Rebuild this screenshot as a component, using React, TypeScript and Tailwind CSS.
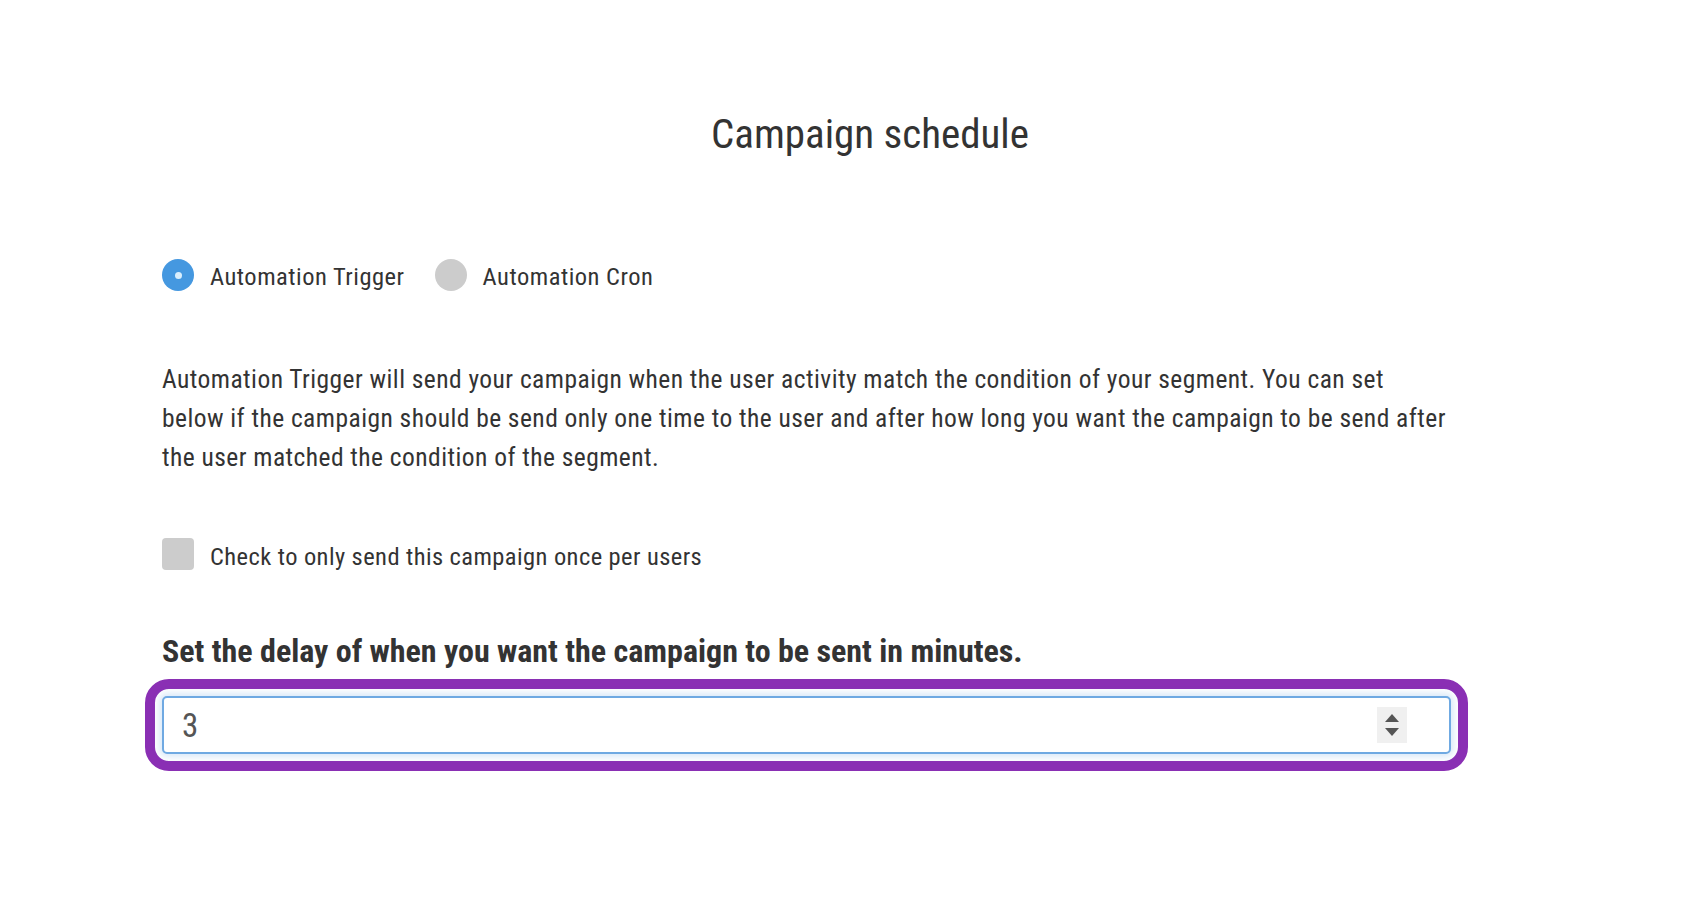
import { useState } from 'react'

const FONT = "font-['Roboto_Condensed','Liberation_Sans_Narrow',Roboto,sans-serif] [font-stretch:condensed]"

function Radio({ checked, label, onClick }: { checked: boolean; label: string; onClick: () => void }) {
  return (
    <button type="button" onClick={onClick} className="flex items-center gap-[16px]">
      <span
        className={`flex h-[32px] w-[32px] items-center justify-center rounded-full ${
          checked ? 'bg-[#4598e0]' : 'bg-[#cccccc]'
        }`}
      >
        {checked && <span className="h-[7px] w-[7px] rounded-full bg-[#d9eefc]" />}
      </span>
      <span className="pt-[4px] text-[24.5px] leading-none tracking-[0.5px] text-[#333]">{label}</span>
    </button>
  )
}

export default function App() {
  const [mode, setMode] = useState<'trigger' | 'cron'>('trigger')
  const [once, setOnce] = useState(false)
  const [delay, setDelay] = useState(3)

  return (
    <div className={`min-h-screen bg-white text-[#333] ${FONT}`}>
      <div className="pl-[162px] pt-[110px]">
        {/* Title */}
        <h1 className="w-[1416px] text-center text-[41px] leading-[48px] font-normal text-[#333]">
          Campaign schedule
        </h1>

        {/* Mode radios */}
        <div className="mt-[101px] flex items-center gap-[30px]">
          <Radio checked={mode === 'trigger'} label="Automation Trigger" onClick={() => setMode('trigger')} />
          <Radio checked={mode === 'cron'} label="Automation Cron" onClick={() => setMode('cron')} />
        </div>

        {/* Description */}
        <p className="mt-[69px] text-[25.5px] leading-[39px] tracking-[0.45px] text-[#333]">
          <span className="block whitespace-nowrap">
            Automation Trigger will send your campaign when the user activity match the condition of your segment. You can set
          </span>
          <span className="block whitespace-nowrap">
            below if the campaign should be send only one time to the user and after how long you want the campaign to be send after
          </span>
          <span className="block whitespace-nowrap">the user matched the condition of the segment.</span>
        </p>

        {/* Once per user */}
        <label className="mt-[61px] flex cursor-pointer items-center gap-[16px]">
          <span
            onClick={() => setOnce(!once)}
            className={`h-[32px] w-[32px] rounded-[4px] ${once ? 'bg-[#4598e0]' : 'bg-[#cccccc]'}`}
          />
          <span className="pt-[6px] text-[24.5px] leading-none tracking-[0.42px]">
            Check to only send this campaign once per users
          </span>
        </label>

        {/* Delay */}
        <h2 className="mt-[61px] text-[32px] leading-[40px] font-bold">
          Set the delay of when you want the campaign to be sent in minutes.
        </h2>

        <div className="-ml-[17px] mt-[8px] w-[1323px] rounded-[24px] border-[10px] border-[#8a2fb4] p-[7px]">
          <div className="flex h-[58px] items-center rounded-[5px] border-2 border-[#6fa9e2] bg-white pl-[18px] pr-[42px] shadow-[0_0_6px_3px_rgba(111,169,226,0.25)]">
            <input
              type="text"
              autoFocus
              value={delay}
              onChange={(e) => setDelay(Number(e.target.value) || 0)}
              className="flex-1 bg-transparent text-[33px] leading-none text-[#555] caret-[#333] outline-none [font-stretch:condensed]"
            />
            <div className="flex h-[36px] w-[30px] flex-col items-center justify-center gap-[6px] bg-[#f0f0f0]">
              <svg width="14" height="8" viewBox="0 0 14 8" onClick={() => setDelay(delay + 1)}>
                <path d="M7 0 L14 8 L0 8 Z" fill="#555" />
              </svg>
              <svg width="14" height="8" viewBox="0 0 14 8" onClick={() => setDelay(Math.max(0, delay - 1))}>
                <path d="M0 0 L14 0 L7 8 Z" fill="#555" />
              </svg>
            </div>
          </div>
        </div>
      </div>
    </div>
  )
}
